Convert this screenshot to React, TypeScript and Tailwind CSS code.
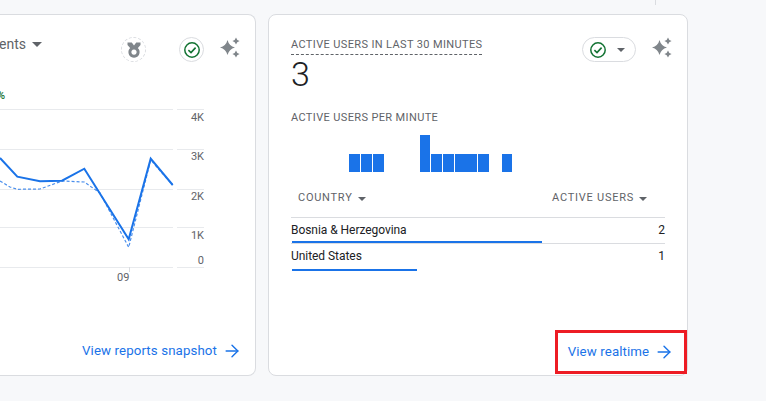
import { ArrowRight } from 'lucide-react'

const solidLine = '0,158 17.3,176.7 40,181.3 62,180.7 84.3,168.7 128.7,239.3 150.7,158.7 172.7,185'
const dashedLine = '0,181 10,187 17.3,189.3 40,189 62,181 84.3,182 100,193 128.7,247.3 150.7,160 172.7,185'
const gridLines = [109.5, 149.5, 189.5, 227.5, 267.5]
const axisLabels = [
  { label: '4K', y: 121 },
  { label: '3K', y: 160 },
  { label: '2K', y: 200 },
  { label: '1K', y: 239 },
  { label: '0', y: 264 },
]
const minuteBars = [
  { x: 349, w: 11, h: 18 },
  { x: 361, w: 11, h: 18 },
  { x: 373, w: 11, h: 18 },
  { x: 420, w: 10, h: 37 },
  { x: 431, w: 11, h: 18 },
  { x: 443, w: 11, h: 18 },
  { x: 455, w: 22, h: 18 },
  { x: 478, w: 11, h: 18 },
  { x: 502, w: 10, h: 18 },
]

function star(cx: number, cy: number, r: number) {
  const k = r * 0.2
  return `M${cx} ${cy - r} Q${cx + k} ${cy - k} ${cx + r} ${cy} Q${cx + k} ${cy + k} ${cx} ${cy + r} Q${cx - k} ${cy + k} ${cx - r} ${cy} Q${cx - k} ${cy - k} ${cx} ${cy - r}Z`
}

function Sparkle() {
  return (
    <svg width="22" height="22" viewBox="0 0 22 22" fill="#80868b">
      <path d={star(8.5, 10.5, 7.5)} />
      <path d={star(17, 4, 3.6)} />
      <path d={star(17, 17, 3.6)} />
    </svg>
  )
}

function CheckBadge() {
  return (
    <svg width="16" height="16" viewBox="0 0 16 16" fill="none" stroke="#137333">
      <circle cx="8" cy="8" r="7.2" strokeWidth="1.5" />
      <path d="M4.4 8.2 L7 10.6 L11.6 5.6" strokeWidth="1.6" />
    </svg>
  )
}

function Medal() {
  return (
    <svg width="16" height="16" viewBox="0 0 16 16" fill="#80868b">
      <path d="M1.5 0.5 H5.8 L8 3.6 L10.2 0.5 H14.5 V3 L11 7 H5 L1.5 3Z" />
      <path
        fillRule="evenodd"
        d="M8 4.5 a5.6 5.6 0 1 0 0.01 0Z M8 7.5 a2.6 2.6 0 1 1 -0.01 0Z"
      />
    </svg>
  )
}

function Caret({ className }: { className: string }) {
  return <span className={`inline-block h-0 w-0 border-x-transparent border-t-[#5f6368] ${className}`} />
}

function FooterLink({ label }: { label: string }) {
  return (
    <span className="flex items-center gap-[5px] text-[13.3px] leading-5 tracking-[0.1px] text-[#1a73e8]">
      {label}
      <ArrowRight size={20} strokeWidth={1.7} />
    </span>
  )
}

function OverviewCard() {
  return (
    <section className="flex h-[362px] w-[256px] shrink-0 flex-col overflow-hidden rounded-r-lg border border-l-0 border-[#dadce0] bg-white">
      <div className="mt-[22px] flex h-[25px] items-start pr-[14px]">
        <span className="flex h-[14px] items-center">
          <span className="-ml-px text-sm leading-[14px] text-[#5f6368]">ents</span>
          <Caret className="ml-[6px] border-x-[5px] border-t-[5px]" />
        </span>
        <span className="ml-auto flex h-[25px] w-[25px] items-center justify-center rounded-full border border-dashed border-[#dadce0]">
          <Medal />
        </span>
        <span className="ml-[33px] flex h-[25px] w-[25px] items-center justify-center rounded-full border border-[#dadce0]">
          <CheckBadge />
        </span>
        <span className="ml-[15px]">
          <Sparkle />
        </span>
      </div>
      <span className="mt-[26px] -ml-[3px] text-[11px] leading-4 font-medium text-[#137333]">%</span>
      {/* chart coords match the page, hence the viewBox offset */}
      <svg width="256" height="190" viewBox="0 100 256 190" className="mt-[-4px] shrink-0">
        {gridLines.map((y) => (
          <g key={y} stroke="#e8eaed">
            <line x1="0" x2="173" y1={y} y2={y} />
            <line x1="177" x2="204" y1={y} y2={y} />
          </g>
        ))}
        <line x1="129.5" x2="129.5" y1="267" y2="272" stroke="#dadce0" />
        <polyline points={dashedLine} fill="none" stroke="#4b8fec" strokeWidth="1.2" strokeDasharray="3 2" />
        <polyline points={solidLine} fill="none" stroke="#1a73e8" strokeWidth="2" />
        {axisLabels.map((a) => (
          <text
            key={a.label}
            x="204"
            y={a.y}
            textAnchor="end"
            fontSize="11"
            fill="#5f6368"
            fontFamily="Roboto, sans-serif"
          >
            {a.label}
          </text>
        ))}
        <text x="117" y="281" fontSize="11" fill="#5f6368" fontFamily="Roboto, sans-serif">
          09
        </text>
      </svg>
      <div className="mt-auto mb-[14px] flex justify-end pr-[13px]">
        <FooterLink label="View reports snapshot" />
      </div>
    </section>
  )
}

function RealtimeCard() {
  return (
    <section className="flex h-[362px] w-[420px] shrink-0 flex-col rounded-lg border border-[#dadce0] bg-white">
      <div className="mt-[22px] flex items-start justify-between pr-[14px] pl-[22px]">
        <div>
          <div className="border-b border-dashed border-[#5f6368] pb-px text-[11px] leading-[16px] tracking-[0.37px] whitespace-nowrap text-[#5f6368]">
            ACTIVE USERS IN LAST 30 MINUTES
          </div>
          <div className="text-[34px] leading-[38px] font-light text-[#202124]">3</div>
        </div>
        <div className="flex items-start">
          <span className="flex h-[25px] w-[54px] items-center gap-[11px] rounded-full border border-[#dadce0] pl-[7px]">
            <CheckBadge />
            <Caret className="border-x-[4px] border-t-[4px]" />
          </span>
          <span className="ml-[15px]">
            <Sparkle />
          </span>
        </div>
      </div>

      <div className="mt-[17px] pl-[22px] text-[11px] leading-4 tracking-[0.37px] text-[#5f6368]">
        ACTIVE USERS PER MINUTE
      </div>
      <svg width="419" height="38" viewBox="269 135 419 38" className="mt-[9px] shrink-0">
        {minuteBars.map((b) => (
          <rect key={b.x} x={b.x} y={172 - b.h} width={b.w} height={b.h} fill="#1a73e8" />
        ))}
      </svg>

      <div className="mt-[16px] ml-[22px] w-[374px] self-start text-xs">
        <div className="flex h-[29px] items-center justify-between border-b border-[#dadce0] pr-[18px] pb-[9px] pl-[7px] text-[11px] tracking-[0.75px] text-[#5f6368]">
          <span className="flex items-center gap-[5px]">
            COUNTRY
            <Caret className="border-x-[4px] border-t-[4px]" />
          </span>
          <span className="flex items-center gap-[5px]">
            ACTIVE USERS
            <Caret className="border-x-[4px] border-t-[4px]" />
          </span>
        </div>
        <div className="border-b border-[#dadce0]">
          <div className="flex h-[23px] items-center justify-between tracking-[-0.05px] text-[#202124]">
            <span>Bosnia &amp; Herzegovina</span>
            <span>2</span>
          </div>
          <div className="ml-px h-[2px] w-[250px] bg-[#1a73e8]" />
        </div>
        <div>
          <div className="flex h-[24px] items-center justify-between tracking-[-0.05px] text-[#202124]">
            <span>United States</span>
            <span>1</span>
          </div>
          <div className="mt-px ml-px h-[2px] w-[125px] bg-[#1a73e8]" />
        </div>
      </div>

      <div className="mt-auto mb-px flex justify-end">
        <div className="flex h-[44px] w-[132px] items-center justify-center border-[3px] border-[#ed1c24]">
          <FooterLink label="View realtime" />
        </div>
      </div>
    </section>
  )
}

export default function App() {
  return (
    <div className="h-[401px] w-[766px] overflow-hidden bg-[#f7f8fa] font-['Roboto',sans-serif]">
      <div className="ml-[655px] h-[5px] w-px bg-[#dadce0]" />
      <div className="mt-[9px] flex gap-3">
        <OverviewCard />
        <RealtimeCard />
      </div>
    </div>
  )
}
